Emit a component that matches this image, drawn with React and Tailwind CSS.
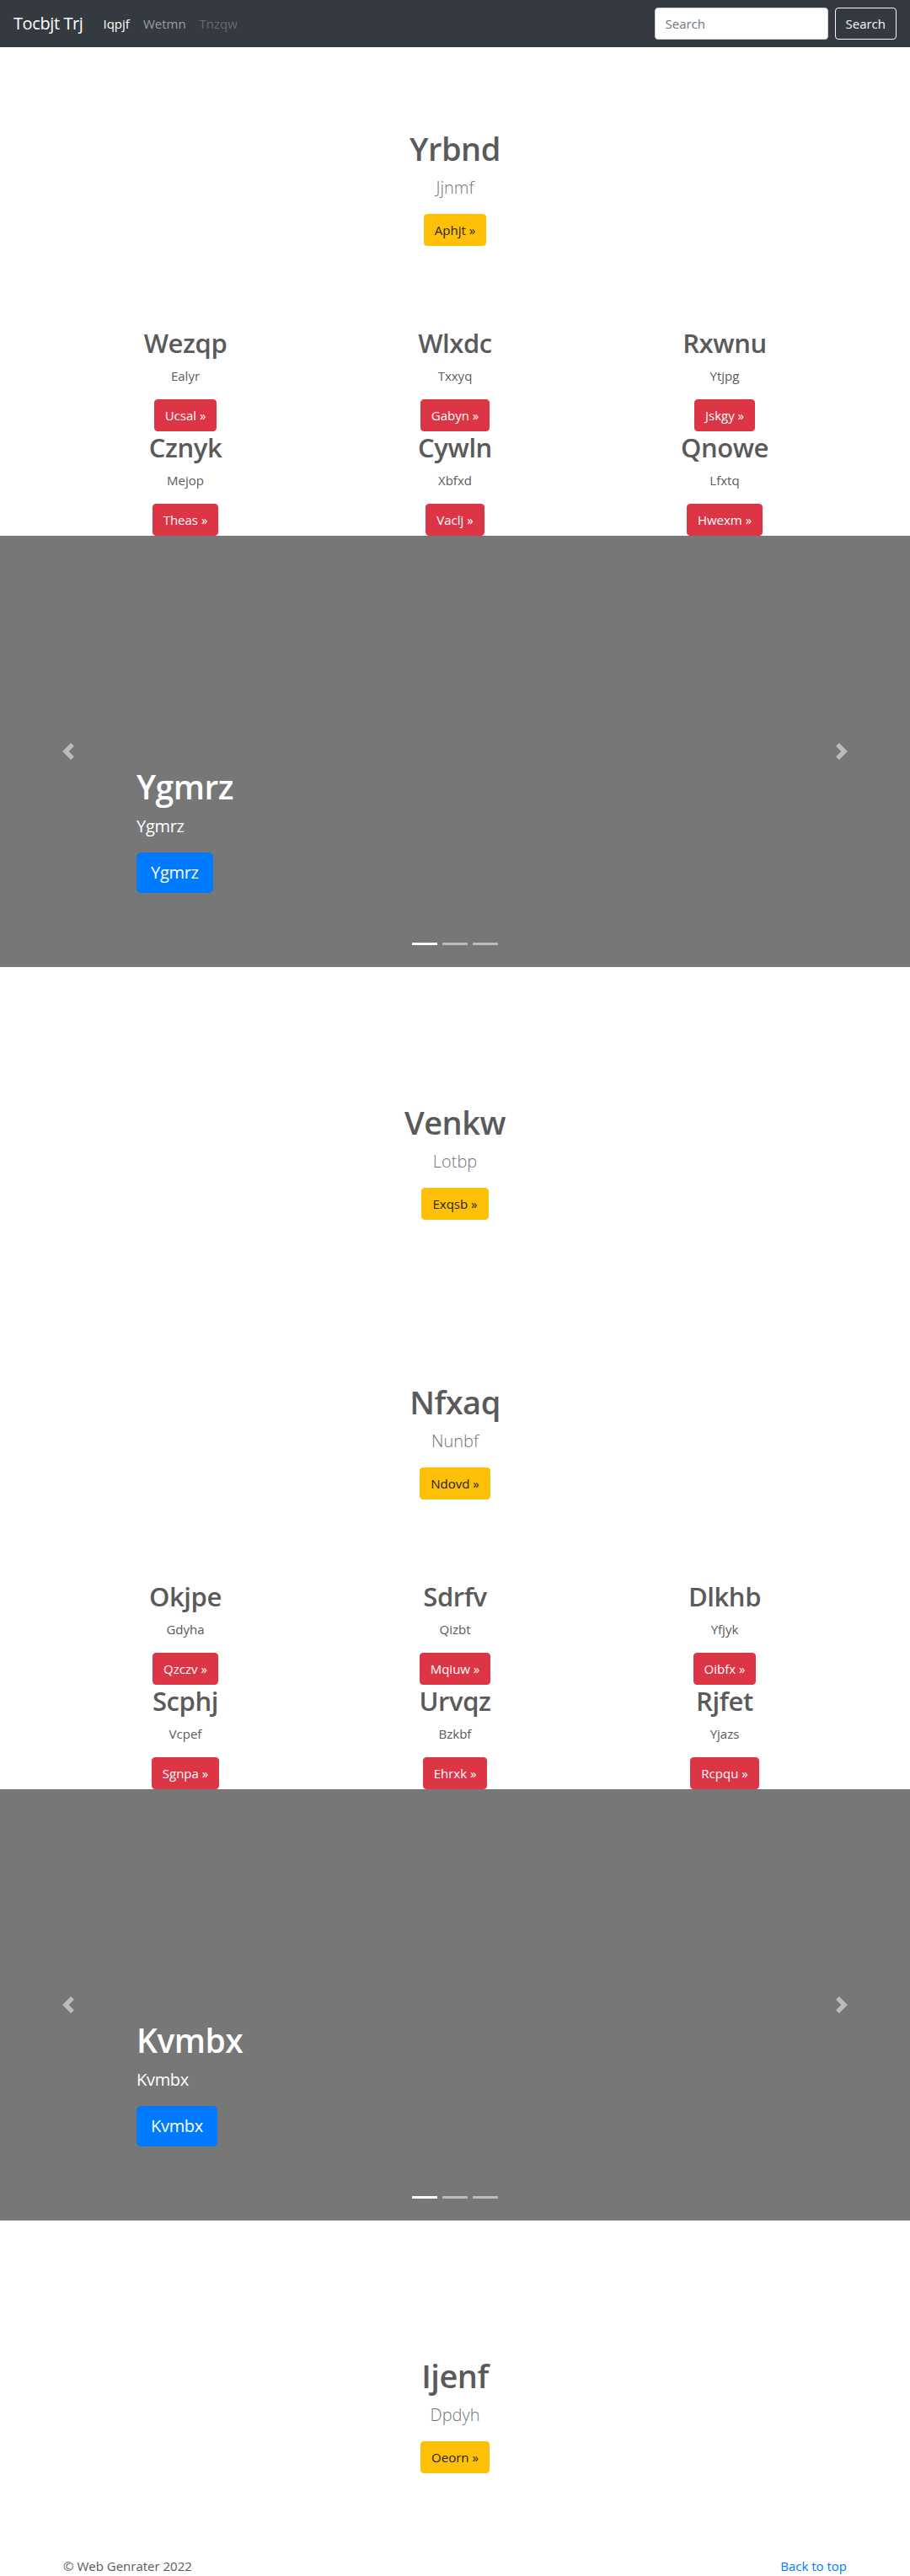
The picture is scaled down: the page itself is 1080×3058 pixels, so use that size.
import React from "react";

const heroes = {
    a: { title: "Yrbnd", lead: "Jjnmf", btn: "Aphjt" },
    b: { title: "Venkw", lead: "Lotbp", btn: "Exqsb" },
    c: { title: "Nfxaq", lead: "Nunbf", btn: "Ndovd" },
    d: { title: "Ijenf", lead: "Dpdyh", btn: "Oeorn" },
};

const features1 = [
    ["Wezqp", "Ealyr", "Ucsal"],
    ["Wlxdc", "Txxyq", "Gabyn"],
    ["Rxwnu", "Ytjpg", "Jskgy"],
    ["Cznyk", "Mejop", "Theas"],
    ["Cywln", "Xbfxd", "Vaclj"],
    ["Qnowe", "Lfxtq", "Hwexm"],
];

const features2 = [
    ["Okjpe", "Gdyha", "Qzczv"],
    ["Sdrfv", "Qizbt", "Mqiuw"],
    ["Dlkhb", "Yfjyk", "Oibfx"],
    ["Scphj", "Vcpef", "Sgnpa"],
    ["Urvqz", "Bzkbf", "Ehrxk"],
    ["Rjfet", "Yjazs", "Rcpqu"],
];

function Navbar() {
    return (
        <nav className="h-14 bg-[#343a40] flex items-center justify-between px-4">
            <div className="flex items-center">
                <a className="text-[20px] leading-[30px] text-white mr-4 tracking-[-0.4px]">Tocbjt Trj</a>
                <a className="px-2 text-white">Iqpjf</a>
                <a className="px-2 text-white/50">Wetmn</a>
                <a className="px-2 text-white/25">Tnzqw</a>
            </div>
            <form className="flex items-center">
                <input
                    className="w-[206px] h-[38px] px-3 mr-2 rounded bg-white border border-[#ced4da] text-[#495057] placeholder:text-[#6c757d] outline-none"
                    placeholder="Search"
                />
                <button
                    type="button"
                    className="h-[38px] px-3 rounded border border-[#f8f9fa] text-[#f8f9fa]"
                >
                    Search
                </button>
            </form>
        </nav>
    );
}

function Hero({ data }) {
    return (
        <section className="py-24 text-center">
            <h1 className="text-[38px] leading-[48px] font-semibold tracking-[-0.5px] mb-2">{data.title}</h1>
            <p className="text-[20px] leading-[30px] font-light text-[#6c757d] mb-4">{data.lead}</p>
            <a className="inline-block h-[38px] px-3 leading-[36px] border border-[#ffc107] rounded bg-[#ffc107] text-[#212529]">
                {data.btn} &raquo;
            </a>
        </section>
    );
}

function Features({ items }) {
    return (
        <div className="max-w-[960px] mx-auto grid grid-cols-3">
            {items.map(([title, text, btn]) => (
                <div key={title} className="text-center">
                    <h2 className="text-[31px] leading-[38px] font-semibold tracking-[-0.4px] mb-2">{title}</h2>
                    <p className="mb-4">{text}</p>
                    <a className="inline-block h-[38px] px-3 leading-[36px] border border-[#dc3545] rounded bg-[#dc3545] text-white">
                        {btn} &raquo;
                    </a>
                </div>
            ))}
        </div>
    );
}

function Arrow({ dir }) {
    const d =
        dir === "prev"
            ? "M5.25 0l-4 4 4 4 1.5-1.5L4.25 4l2.5-2.5L5.25 0z"
            : "M2.75 0l-1.5 1.5L3.75 4l-2.5 2.5L2.75 8l4-4-4-4z";
    return (
        <svg width="20" height="20" viewBox="0 0 8 8" fill="#fff">
            <path d={d} />
        </svg>
    );
}

function Carousel({ title }) {
    return (
        <div className="relative h-[512px] bg-[#777] mb-16 flex items-end pl-[162px] pb-[88px]">
            <div className="text-white">
                <h1 className="text-[39px] leading-[48px] font-semibold tracking-[-0.5px] mb-2">{title}</h1>
                <p className="text-[20px] leading-[30px] tracking-[-0.3px]">{title}</p>
                <a className="inline-block mt-4 h-[48px] px-4 leading-[46px] text-[20px] tracking-[-0.3px] border border-[#007bff] rounded-[5px] bg-[#007bff] text-white">
                    {title}
                </a>
            </div>
            <div className="absolute left-0 top-0 h-full w-[15%] flex items-center justify-center opacity-50">
                <Arrow dir="prev" />
            </div>
            <div className="absolute right-0 top-0 h-full w-[15%] flex items-center justify-center opacity-50">
                <Arrow dir="next" />
            </div>
            <div className="absolute bottom-[26px] left-1/2 -translate-x-1/2 flex gap-[6px]">
                <span className="w-[30px] h-[3px] bg-white" />
                <span className="w-[30px] h-[3px] bg-white/50" />
                <span className="w-[30px] h-[3px] bg-white/50" />
            </div>
        </div>
    );
}

export default function App() {
    return (
        <div className="font-['Open_Sans',sans-serif] text-[15px] leading-6 text-[#5a5a5a] bg-white">
            <Navbar />
            <main>
                <Hero data={heroes.a} />
                <Features items={features1} />
                <Carousel title="Ygmrz" />
                <Hero data={heroes.b} />
                <Hero data={heroes.c} />
                <Features items={features2} />
                <Carousel title="Kvmbx" />
                <Hero data={heroes.d} />
            </main>
            <footer className="max-w-[960px] mx-auto px-[15px] pt-[2px] flex justify-between">
                <p>&copy; Web Genrater 2022</p>
                <p>
                    <a className="text-[#007bff]">Back to top</a>
                </p>
            </footer>
        </div>
    );
}
